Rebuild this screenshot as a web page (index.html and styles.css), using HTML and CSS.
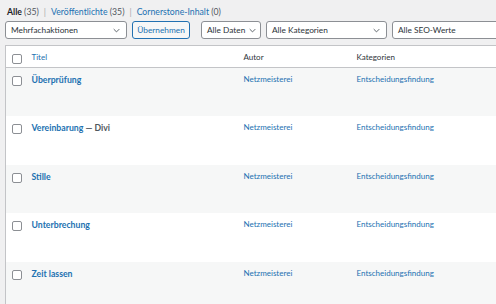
FILE: index.html
```html
<!DOCTYPE html>
<html lang="de">
<head>
    <meta charset="UTF-8">
    <title>Beiträge</title>
    <link rel="stylesheet" href="styles.css">
</head>
<body>
<div id="wrap">
    <ul class="subsubsub">
        <li><a class="current" href="#">Alle <span class="count">(35)</span></a><span class="sep">|</span></li>
        <li><a href="#">Veröffentlichte <span class="count">(35)</span></a><span class="sep">|</span></li>
        <li><a href="#">Cornerstone-Inhalt <span class="count">(0)</span></a></li>
    </ul>

    <div class="tablenav">
        <div class="select w-bulk">Mehrfachaktionen<svg viewBox="0 0 10 6"><path d="M1 1l4 4 4-4"/></svg></div>
        <div class="button">Übernehmen</div>
        <div class="select w-date">Alle Daten<svg viewBox="0 0 10 6"><path d="M1 1l4 4 4-4"/></svg></div>
        <div class="select w-cat">Alle Kategorien<svg viewBox="0 0 10 6"><path d="M1 1l4 4 4-4"/></svg></div>
        <div class="select w-seo">Alle SEO-Werte</div>
    </div>

    <table class="posts">
        <thead>
        <tr>
            <td class="cb"><span class="check"></span></td>
            <th class="col-title"><a href="#">Titel</a></th>
            <th class="col-author">Autor</th>
            <th class="col-cat">Kategorien</th>
        </tr>
        </thead>
        <tbody>
        <tr class="alt">
            <td class="cb"><span class="check"></span></td>
            <td class="col-title"><a class="row-title" href="#">Überprüfung</a></td>
            <td class="col-author"><a href="#">Netzmeisterei</a></td>
            <td class="col-cat"><a href="#">Entscheidungsfindung</a></td>
        </tr>
        <tr>
            <td class="cb"><span class="check"></span></td>
            <td class="col-title"><a class="row-title" href="#">Vereinbarung</a> <span class="state">— Divi</span></td>
            <td class="col-author"><a href="#">Netzmeisterei</a></td>
            <td class="col-cat"><a href="#">Entscheidungsfindung</a></td>
        </tr>
        <tr class="alt">
            <td class="cb"><span class="check"></span></td>
            <td class="col-title"><a class="row-title" href="#">Stille</a></td>
            <td class="col-author"><a href="#">Netzmeisterei</a></td>
            <td class="col-cat"><a href="#">Entscheidungsfindung</a></td>
        </tr>
        <tr>
            <td class="cb"><span class="check"></span></td>
            <td class="col-title"><a class="row-title" href="#">Unterbrechung</a></td>
            <td class="col-author"><a href="#">Netzmeisterei</a></td>
            <td class="col-cat"><a href="#">Entscheidungsfindung</a></td>
        </tr>
        <tr class="alt">
            <td class="cb"><span class="check"></span></td>
            <td class="col-title"><a class="row-title" href="#">Zeit lassen</a></td>
            <td class="col-author"><a href="#">Netzmeisterei</a></td>
            <td class="col-cat"><a href="#">Entscheidungsfindung</a></td>
        </tr>
        </tbody>
    </table>
</div>
</body>
</html>
```

FILE: styles.css
```css
*{
    margin: 0;
    padding: 0;
    box-sizing: border-box;
}

body{
    background: #f0f0f1;
    font-family: Lato, "Noto Sans", sans-serif;
    font-size: 8px;
    color: #3c434a;
    overflow: hidden;
}
a{
    color: #2271b1;
    text-decoration: none;
}

#wrap{
    padding-left: 5px;
    width: 496px;
    overflow: hidden;
}

.subsubsub{
    list-style: none;
    display: flex;
    padding: 6px 0 0 2px;
    height: 21px;
    font-size: 8.7px;
    line-height: 11px;
}
.subsubsub .sep{
    color: #a7aaad;
    margin: 0 5px 0 5px;
}
.subsubsub .current{
    color: #1d2327;
    font-weight: 700;
}
.subsubsub .count{
    color: #50575e;
    font-weight: 400;
}

.tablenav{
    display: flex;
    height: 18px;
    font-size: 8.3px;
}
.select{
    position: relative;
    flex: none;
    height: 18px;
    background: #fff;
    border: 1px solid #8c8f94;
    border-radius: 3px;
    padding-left: 5px;
    line-height: 16px;
    color: #2c3338;
}
.select svg{
    position: absolute;
    right: 6px;
    top: 6px;
    width: 7px;
    height: 5px;
    fill: none;
    stroke: #50575e;
    stroke-width: 1.3;
}
.w-bulk{ width: 122px; }
.w-date{ width: 60px; margin-left: 11px; }
.w-date svg{ right: 4px; }
.w-cat{ width: 121px; margin-left: 5px; }
.w-seo{ width: 130px; margin-left: 5px; }

.button{
    flex: none;
    width: 58px;
    margin-left: 5px;
    height: 18px;
    border: 1px solid #2271b1;
    border-radius: 3px;
    background: #f6f7f7;
    color: #2271b1;
    text-align: center;
    line-height: 16px;
}

.posts{
    margin-top: 6px;
    width: 520px;
    border-collapse: collapse;
    background: #fff;
    border: 1px solid #c3c4c7;
    table-layout: fixed;
}
.posts th, .posts td{
    text-align: left;
    vertical-align: top;
    font-weight: 400;
}
.posts thead th, .posts thead td{
    height: 22px;
    padding-top: 6px;
    border-bottom: 1px solid #c3c4c7;
    color: #2c3338;
}
.posts tbody td{
    height: 48.6px;
    padding-top: 6px;
}
.posts tr.alt td{
    background: #f6f7f7;
}

.cb{ width: 26px; padding-left: 6px; }
.col-title{ width: 212px; }
.col-author{ width: 113px; }
.col-cat{ width: auto; }

.check{
    display: block;
    width: 10px;
    height: 10px;
    margin-top: 2px;
    background: #fff;
    border: 1px solid #8c8f94;
    border-radius: 2px;
}

.row-title, .state{
    font-size: 8.7px;
    font-weight: 700;
}
.state{
    color: #50575e;
}
```
